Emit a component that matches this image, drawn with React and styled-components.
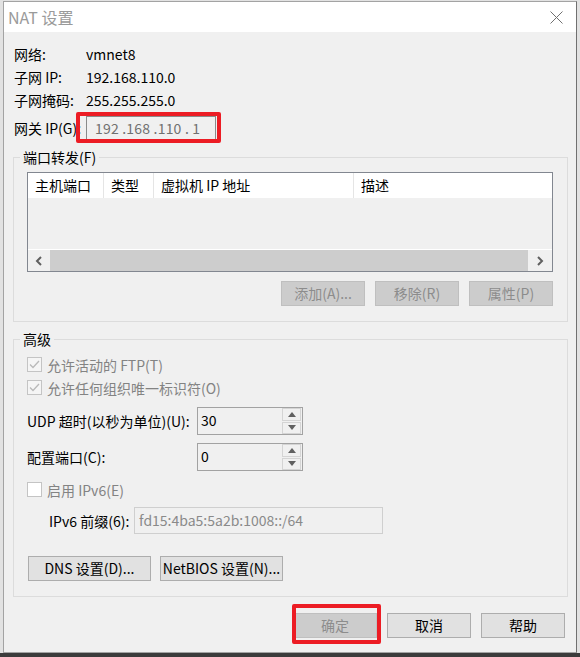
import React from "react";
import styled, { createGlobalStyle } from "styled-components";

const GlobalStyle = createGlobalStyle`
  html, body {
    margin: 0;
    padding: 0;
  }
  body {
    width: 580px;
    height: 657px;
    overflow: hidden;
    background: linear-gradient(to bottom, #e2e2e2 0, #e2e2e2 653px, #3b3b3b 653px);
    font-family: "Noto Sans CJK SC", "Noto Sans", sans-serif;
    font-size: 14px;
    color: #000;
  }
  * {
    box-sizing: border-box;
  }
`;

const Screen = styled.div`
  width: 580px;
  height: 657px;
  padding: 1px 0 0 3px;
`;

const Dialog = styled.div`
  width: 574px;
  height: 652px;
  border: 1px solid #a3a3a3;
  border-right-color: #707070;
  background: #f0f0f0;
  display: flex;
  flex-direction: column;
`;

const TitleBar = styled.div`
  height: 30px;
  flex: none;
  background: #fff;
  display: flex;
  align-items: center;
  justify-content: space-between;
  padding: 0 13px 0 4px;
`;

const Title = styled.span`
  font-size: 16px;
  line-height: 20px;
  color: #9a9a9a;
`;

const Body = styled.div`
  display: flex;
  flex-direction: column;
  padding: 0 8px 0 9px;
`;

const InfoGrid = styled.div`
  display: grid;
  grid-template-columns: 72px 1fr;
  grid-auto-rows: 23px;
  align-items: center;
  padding: 10px 0 0 1px;
  line-height: 20px;
`;

const GatewayRow = styled.div`
  display: grid;
  grid-template-columns: 72px 1fr;
  align-items: center;
  height: 28px;
  margin-top: 3px;
  padding-left: 1px;
`;

const IpBox = styled.div`
  position: relative;
  width: 130px;
  height: 24px;
  border: 1px solid #8a8a8a;
  background: #f0f0f0;
  color: #707070;
  padding-left: 8px;
  line-height: 22px;
  letter-spacing: 0.2px;
  white-space: pre;

  &::after {
    content: "";
    position: absolute;
    top: -5px;
    left: -11px;
    right: -6px;
    bottom: -4px;
    border: 4px solid #ec1c24;
    border-radius: 2px;
    pointer-events: none;
  }
`;

const Group = styled.fieldset`
  margin: ${(p) => p.$top}px 0 0 0;
  padding: 0;
  border: 1px solid #dcdcdc;
  min-width: 0;
`;

const Legend = styled.legend`
  margin-left: 6px;
  padding: 0 3px;
  line-height: 18px;
  font-size: 14px;
`;

const GroupInner = styled.div`
  padding: ${(p) => p.$top}px 14px 15px 13px;
  display: flex;
  flex-direction: column;
`;

const ListView = styled.div`
  height: 100px;
  border: 1px solid #828790;
  background: #f0f0f0;
  display: flex;
  flex-direction: column;
`;

const HeaderRow = styled.div`
  display: grid;
  grid-template-columns: 76px 50px 200px 1fr;
  height: 25px;
  flex: none;
  background: #fff;
`;

const HeaderCell = styled.div`
  padding-left: 7px;
  line-height: 25px;
  border-right: 1px solid #e5e5e5;
  white-space: nowrap;

  &:last-child {
    border-right: none;
  }
`;

const ListBody = styled.div`
  flex: 1;
`;

const HScroll = styled.div`
  height: 22px;
  flex: none;
  border-top: 1px solid #fff;
  display: flex;
`;

const ScrollArrow = styled.div`
  width: ${(p) => p.$w}px;
  flex: none;
  display: flex;
  align-items: center;
  justify-content: center;
  background: #f0f0f0;
`;

const ScrollThumb = styled.div`
  flex: 1;
  background: #cdcdcd;
`;

const ButtonRow = styled.div`
  display: flex;
  justify-content: ${(p) => p.$justify || "flex-end"};
  gap: ${(p) => p.$gap}px;
  margin-top: ${(p) => p.$top}px;
  padding-left: ${(p) => p.$left || 0}px;
  padding-right: ${(p) => p.$right || 0}px;
`;

const Button = styled.div`
  position: relative;
  width: ${(p) => p.$w}px;
  height: 25px;
  border: 1px solid ${(p) => (p.$disabled ? "#bfbfbf" : "#adadad")};
  background: ${(p) => (p.$disabled ? "#cccccc" : "#e1e1e1")};
  color: ${(p) => (p.$disabled ? "#8c8c8c" : "#000")};
  font-size: 14px;
  line-height: 23px;
  text-align: center;
  white-space: nowrap;

  ${(p) =>
    p.$marked &&
    `
    &::after {
      content: "";
      position: absolute;
      top: -10px;
      left: -2px;
      right: -5px;
      bottom: -7px;
      border: 4px solid #ec1c24;
      border-radius: 2px;
      pointer-events: none;
    }
  `}
`;

const CheckRow = styled.div`
  display: flex;
  align-items: center;
  gap: 5px;
  height: 23px;
  margin-top: ${(p) => p.$top || 0}px;
`;

const CheckBox = styled.div`
  width: 15px;
  height: 15px;
  flex: none;
  border: 1px solid #c4c4c4;
  background: ${(p) => (p.$checked ? "#f5f5f5" : "#fff")};
  display: flex;
  align-items: center;
  justify-content: center;
`;

const CheckLabel = styled.span`
  color: #838383;
  line-height: 20px;
`;

const FieldRow = styled.div`
  display: flex;
  align-items: center;
  height: ${(p) => p.$h}px;
  margin-top: ${(p) => p.$top}px;
  padding-left: ${(p) => p.$indent || 0}px;
`;

const FieldLabel = styled.span`
  width: ${(p) => p.$w}px;
  flex: none;
  line-height: 20px;
  white-space: nowrap;
`;

const SpinBox = styled.div`
  width: 106px;
  height: 28px;
  border: 1px solid #a2a2a2;
  background: #f0f0f0;
  display: flex;
`;

const SpinValue = styled.div`
  flex: 1;
  padding: 2px 0 0 3px;
  line-height: 20px;
`;

const SpinButtons = styled.div`
  width: 21px;
  display: flex;
  flex-direction: column;
  gap: 1px;
  padding: 0 1px;
`;

const SpinButton = styled.div`
  flex: 1;
  border: 1px solid #d4d4d4;
  background: #f0f0f0;
  display: flex;
  align-items: center;
  justify-content: center;
`;

const TextBox = styled.div`
  width: 249px;
  height: 27px;
  border: 1px solid #cfcfcf;
  background: #f0f0f0;
  color: #8a8a8a;
  padding: 2px 0 0 4px;
  line-height: 20px;
`;

const Footer = styled.div`
  display: flex;
  justify-content: flex-end;
  gap: 10px;
  margin-top: 16px;
  padding-right: 3px;
`;

const CloseIcon = () => (
  <svg width="13" height="13" viewBox="0 0 13 13">
    <path d="M0.5 0.5 L12.5 12.5 M12.5 0.5 L0.5 12.5" stroke="#707070" strokeWidth="1" fill="none" />
  </svg>
);

const Chevron = ({ dir }) => (
  <svg width="8" height="10" viewBox="0 0 8 10">
    <path
      d={dir === "left" ? "M6 1 L2 5 L6 9" : "M2 1 L6 5 L2 9"}
      stroke="#606060"
      strokeWidth="2"
      fill="none"
    />
  </svg>
);

const Tick = () => (
  <svg width="11" height="9" viewBox="0 0 11 9">
    <path d="M1 4.5 L4 7.5 L10 1" stroke="#b9b9b9" strokeWidth="1.3" fill="none" />
  </svg>
);

const Arrow = ({ up }) => (
  <svg width="8" height="5" viewBox="0 0 8 5">
    <path d={up ? "M0 5 L4 0 L8 5 Z" : "M0 0 L8 0 L4 5 Z"} fill="#606060" />
  </svg>
);

const Spin = ({ value }) => (
  <SpinBox>
    <SpinValue>{value}</SpinValue>
    <SpinButtons>
      <SpinButton>
        <Arrow up />
      </SpinButton>
      <SpinButton>
        <Arrow />
      </SpinButton>
    </SpinButtons>
  </SpinBox>
);

export default function App() {
  return (
    <>
      <GlobalStyle />
      <Screen>
        <Dialog>
          <TitleBar>
            <Title>NAT 设置</Title>
            <CloseIcon />
          </TitleBar>
          <Body>
            <InfoGrid>
              <span>网络:</span>
              <span>vmnet8</span>
              <span>子网 IP:</span>
              <span>192.168.110.0</span>
              <span>子网掩码:</span>
              <span>255.255.255.0</span>
            </InfoGrid>
            <GatewayRow>
              <span>网关 IP(G):</span>
              <IpBox>192 .168 .110 . 1</IpBox>
            </GatewayRow>

            <Group $top={6}>
              <Legend>端口转发(F)</Legend>
              <GroupInner $top={6}>
                <ListView>
                  <HeaderRow>
                    <HeaderCell>主机端口</HeaderCell>
                    <HeaderCell>类型</HeaderCell>
                    <HeaderCell>虚拟机 IP 地址</HeaderCell>
                    <HeaderCell>描述</HeaderCell>
                  </HeaderRow>
                  <ListBody />
                  <HScroll>
                    <ScrollArrow $w={22}>
                      <Chevron dir="left" />
                    </ScrollArrow>
                    <ScrollThumb />
                    <ScrollArrow $w={24}>
                      <Chevron dir="right" />
                    </ScrollArrow>
                  </HScroll>
                </ListView>
                <ButtonRow $gap={10} $top={9}>
                  <Button $w={84} $disabled>添加(A)...</Button>
                  <Button $w={84} $disabled>移除(R)</Button>
                  <Button $w={84} $disabled>属性(P)</Button>
                </ButtonRow>
              </GroupInner>
            </Group>

            <Group $top={8}>
              <Legend>高级</Legend>
              <GroupInner $top={5}>
                <CheckRow>
                  <CheckBox $checked>
                    <Tick />
                  </CheckBox>
                  <CheckLabel>允许活动的 FTP(T)</CheckLabel>
                </CheckRow>
                <CheckRow>
                  <CheckBox $checked>
                    <Tick />
                  </CheckBox>
                  <CheckLabel>允许任何组织唯一标识符(O)</CheckLabel>
                </CheckRow>
                <FieldRow $h={28} $top={8}>
                  <FieldLabel $w={170}>UDP 超时(以秒为单位)(U):</FieldLabel>
                  <Spin value="30" />
                </FieldRow>
                <FieldRow $h={28} $top={8}>
                  <FieldLabel $w={170}>配置端口(C):</FieldLabel>
                  <Spin value="0" />
                </FieldRow>
                <CheckRow $top={7}>
                  <CheckBox />
                  <CheckLabel>启用 IPv6(E)</CheckLabel>
                </CheckRow>
                <FieldRow $h={27} $top={6} $indent={22}>
                  <FieldLabel $w={85}>IPv6 前缀(6):</FieldLabel>
                  <TextBox>fd15:4ba5:5a2b:1008::/64</TextBox>
                </FieldRow>
                <ButtonRow $justify="flex-start" $gap={9} $top={22} $left={1}>
                  <Button $w={123}>DNS 设置(D)...</Button>
                  <Button $w={123}>NetBIOS 设置(N)...</Button>
                </ButtonRow>
              </GroupInner>
            </Group>

            <Footer>
              <Button $w={84} $disabled $marked>确定</Button>
              <Button $w={84}>取消</Button>
              <Button $w={84}>帮助</Button>
            </Footer>
          </Body>
        </Dialog>
      </Screen>
    </>
  );
}
